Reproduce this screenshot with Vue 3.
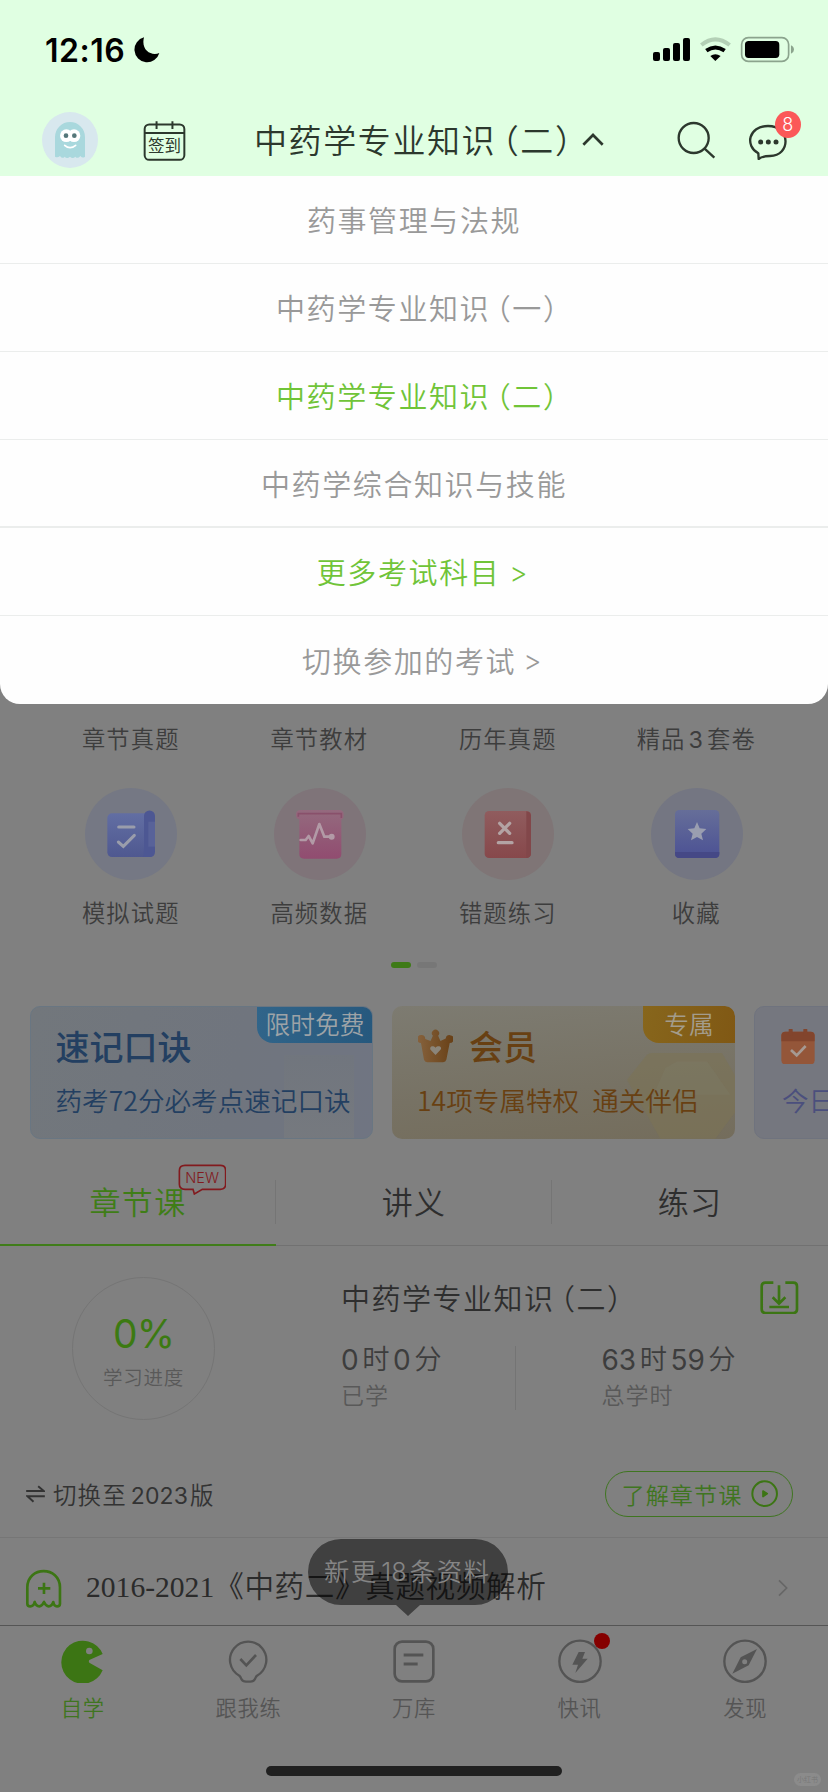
<script setup>
const subjects = [
  { name: '药事管理与法规' },
  { name: '中药学专业知识', level: '（一）' },
  { name: '中药学专业知识', level: '（二）', active: true },
  { name: '中药学综合知识与技能', last: true },
]
const topLabels = [['章节真题'], ['章节教材'], ['历年真题'], ['精品', '3', '套卷']]
const tools = [
  { label: '模拟试题', icon: 'paper' },
  { label: '高频数据', icon: 'pulse' },
  { label: '错题练习', icon: 'wrong' },
  { label: '收藏', icon: 'star' },
]
const tabs = [
  { label: '自学', icon: 'learn', active: true },
  { label: '跟我练', icon: 'practice' },
  { label: '万库', icon: 'bank' },
  { label: '快讯', icon: 'news' },
  { label: '发现', icon: 'find' },
]
</script>

<template>
  <div class="phone">
    <div class="status">
      <span class="time">12:16</span>
      <svg class="moon" viewBox="400 110 78 78"><path d="M430 111 A38 38 0 1 0 476 158 C452 168 420 150 430 111Z" /></svg>
      <svg class="signals" viewBox="714 108 430 80">
        <rect x="717" y="156" width="21" height="27" rx="6" /><rect x="747" y="144" width="21" height="39" rx="6" />
        <rect x="777" y="129" width="21" height="54" rx="6" /><rect x="807" y="114" width="21" height="69" rx="6" />
        <path d="M862 135 Q904 101 947 135" fill="none" stroke="#b4d0b6" stroke-width="12" />
        <path d="M877 152 Q904 133 932 152" fill="none" stroke="#000" stroke-width="12" />
        <path d="M889 168 Q904 157 920 168 L904 183Z" />
        <rect x="983" y="113" width="141" height="71" rx="20" fill="none" stroke="#8ba48d" stroke-width="5" />
        <rect x="993" y="123" width="103" height="51" rx="11" />
        <path d="M1131 136 Q1140 140 1140 149 Q1140 157 1131 161Z" fill="#8ba48d" />
      </svg>
    </div>

    <header class="header">
      <svg class="avatar" viewBox="126 336 168 168">
        <circle cx="210" cy="420" r="84" fill="#d8e8ee" />
        <path d="M165 470 V411 A45 45 0 0 1 255 411 V470 Q248 476 241 468 Q233 478 226 470 Q218 478 210 470 Q201 478 194 470 Q187 478 180 468 Q172 475 165 470Z" fill="#a9d8dd" />
        <circle cx="199" cy="407" r="19" fill="#fff" /><circle cx="222" cy="407" r="19" fill="#fff" />
        <circle cx="198" cy="407" r="7" fill="#55777a" /><circle cx="223" cy="407" r="7" fill="#55777a" />
        <path d="M194 436 Q210 450 227 436" fill="none" stroke="#fff" stroke-width="5" stroke-linecap="round" />
      </svg>
      <div class="calendar">
        <svg viewBox="430 360 130 126" fill="none" stroke="#2c382d" stroke-width="6">
          <rect x="435" y="373" width="120" height="107" rx="14" /><path d="M435 399H555M471 363V387M519 363V387" />
        </svg>
        <span>签到</span>
      </div>
      <div class="title">
        <span>中药学专业知识<i class="lvl">（二）</i></span>
        <svg viewBox="500 398 68 44"><path d="M504 436 L533 407 L562 436" fill="none" stroke="#2c382d" stroke-width="8" /></svg>
      </div>
      <svg class="search" viewBox="788 362 116 114" fill="none" stroke="#2c382d" stroke-width="7">
        <circle cx="838" cy="413" r="45" /><path d="M870 444 L900 472" />
      </svg>
      <div class="chat">
        <svg viewBox="1002 370 120 110">
          <path d="M1034 475 L1033 458 C992 436 1003 376 1062 376 C1131 376 1131 466 1068 466 C1055 466 1046 466 1034 475Z" fill="none" stroke="#2c382d" stroke-width="7" stroke-linejoin="round" />
          <g fill="#2c382d"><circle cx="1040" cy="424" r="7.500" /><circle cx="1063" cy="424" r="7.500" /><circle cx="1086" cy="424" r="7.500" /></g>
        </svg>
        <b>8</b>
      </div>
    </header>

    <div class="menu-wrap">
      <nav class="menu">
        <div v-for="s in subjects" :key="s.name + s.level" class="item" :class="{ active: s.active, last: s.last, leveled: s.level }">
          <span>{{ s.name }}<i v-if="s.level" class="lvl">{{ s.level }}</i></span>
        </div>
        <div class="item active more"><span>更多考试科目</span><em>&gt;</em></div>
        <div class="item switch"><span>切换参加的考试</span><em>&gt;</em></div>
      </nav>
    </div>

    <div class="labels">
      <div v-for="(l, i) in topLabels" :key="i"><template v-for="(t, j) in l" :key="j"><b v-if="j === 1" class="num">{{ t }}</b><template v-else>{{ t }}</template></template></div>
    </div>
    <div class="tools">
      <div v-for="t in tools" :key="t.label" class="tool">
        <svg v-if="t.icon === 'paper'" viewBox="256 294 276 276">
          <defs><linearGradient id="gp" x2="0" y2="1"><stop stop-color="#626ea3" /><stop offset="1" stop-color="#4f5890" /></linearGradient></defs>
          <circle cx="394" cy="432" r="138" fill="#757884" />
          <rect x="323" y="370" width="140" height="131" rx="14" fill="url(#gp)" />
          <path d="M433 470 V378 A16 16 0 0 1 466 378 V485 Q466 501 450 501 H430 Q433 490 433 470Z" fill="#4d5793" />
          <path d="M446 470 V395 H466 V470Z" fill="#586299" />
          <path d="M357 411H403M356 456L371 469L404 436" fill="none" stroke="#9a9dab" stroke-width="9" stroke-linecap="round" />
        </svg>
        <svg v-else-if="t.icon === 'pulse'" viewBox="822 294 276 276">
          <defs><linearGradient id="gq" x2="0" y2="1"><stop stop-color="#946a7e" /><stop offset="1" stop-color="#914c70" /></linearGradient></defs>
          <circle cx="960" cy="432" r="138" fill="#7f7479" />
          <path d="M902 360H1018Q1031 360 1031 374Q1031 388 1024 388V492Q1024 506 1010 506H912Q898 506 898 492V388Q888 386 888 374Q888 360 902 360Z" fill="url(#gq)" />
          <path d="M895 380V371H1024V384" fill="none" stroke="#89506b" stroke-width="5" />
          <path d="M902 450H917L926 438L938 460L958 402L973 440H990" fill="none" stroke="#b29aa6" stroke-width="8" stroke-linejoin="round" stroke-linecap="round" /><circle cx="995" cy="440" r="9" fill="#b29aa6" />
        </svg>
        <svg v-else-if="t.icon === 'wrong'" viewBox="145 294 276 276">
          <defs><linearGradient id="gw" x2="0" y2="1"><stop stop-color="#905c5e" /><stop offset="1" stop-color="#87484b" /></linearGradient></defs>
          <circle cx="283" cy="432" r="138" fill="#7f7576" />
          <rect x="213" y="363" width="139" height="141" rx="13" fill="url(#gw)" />
          <path d="M338 364Q352 365 352 378V490Q352 502 338 504Z" fill="#82474a" />
          <path d="M258 400L288 430M288 400L258 430M254 458H295" stroke="#b3a3a4" stroke-width="10" stroke-linecap="round" />
        </svg>
        <svg v-else viewBox="710 294 276 276">
          <defs><linearGradient id="gs" x2="0" y2="1"><stop stop-color="#666e99" /><stop offset="1" stop-color="#4b5194" /></linearGradient></defs>
          <circle cx="848" cy="432" r="138" fill="#747682" />
          <rect x="782" y="360" width="133" height="144" rx="13" fill="url(#gs)" />
          <path d="M782 486H915V491Q915 504 902 504H795Q782 504 782 491Z" fill="#454886" />
          <path d="M848 396L856 415L876 417L861 431L866 451L848 441L830 451L835 431L820 417L840 415Z" fill="#9a9eb0" />
        </svg>
        <span>{{ t.label }}</span>
      </div>
    </div>
    <div class="pager"><i class="on"></i><i></i></div>

    <section class="cards">
      <article class="card blue">
        <div class="deco"></div>
        <div class="badge">限时免费</div>
        <h3>速记口诀</h3>
        <p>药考72分必考点速记口诀</p>
      </article>
      <article class="card gold">
        <svg class="hex" viewBox="640 220 323 257"><path d="M700 225Q705 220 715 220H925L1000 350L905 477H740L640 300Z" fill="#7c7355" opacity=".6" /><path d="M755 265L790 245H880L950 345H830L700 390Z" fill="#7e7a67" opacity=".35" /></svg>
        <div class="badge">专属</div>
        <h3>
          <svg viewBox="12 148 106 102">
            <defs><linearGradient id="gc"><stop stop-color="#86623d" /><stop offset="1" stop-color="#684016" /></linearGradient></defs>
            <path d="M30 240L21 190A12 12 0 1 1 34 178L50 184L57 168A11 11 0 1 1 73 168L80 184L96 176A12 12 0 1 1 108 190L98 240Q96 248 88 248H40Q32 248 30 240Z" fill="url(#gc)" />
            <path d="M65 226L52 213C43 203 56 194 65 204C74 194 89 203 78 213Z" fill="#8b857a" />
          </svg>
          会员
        </h3>
        <p>14项专属特权<span>通关伴侣</span></p>
      </article>
      <article class="card violet">
        <h3>
          <svg viewBox="1100 146 102 106">
            <rect x="1101" y="154" width="100" height="98" rx="12" fill="#945639" /><path d="M1101 183V166Q1101 154 1113 154H1189Q1201 154 1201 166V183Z" fill="#82452d" />
            <path d="M1129 149V160M1173 149V160" stroke="#82452d" stroke-width="12" stroke-linecap="round" /><path d="M1130 209L1147 225L1174 197" fill="none" stroke="#a59992" stroke-width="8" />
          </svg>
        </h3>
        <p>今日</p>
      </article>
    </section>

    <div class="course-tabs">
      <div class="ct active">章节课
        <div class="new">
          <svg viewBox="533 550 146 94"><path d="M554 554H660Q676 554 676 570V611Q676 626 660 626H606L582 640L578 626H554Q537 626 537 611V570Q537 554 554 554Z" fill="none" stroke="#821a1e" stroke-width="5" /></svg>
          <span>NEW</span>
        </div>
      </div>
      <div class="ct">讲义</div>
      <div class="ct">练习</div>
    </div>

    <section class="progress">
      <div class="ring"><strong>0%</strong><span>学习进度</span></div>
      <div class="info">
        <div class="info-head">
          <span>中药学专业知识<i class="lvl">（二）</i></span>
          <svg viewBox="1034 94 116 100" fill="none" stroke="#3c7514" stroke-width="8">
            <path d="M1074 99H1050Q1039 99 1039 110V179Q1039 190 1050 190H1134Q1145 190 1145 179V110Q1145 99 1134 99H1110M1091 107V160M1072 143L1091 162L1110 143M1062 172H1121" />
          </svg>
        </div>
        <div class="stats">
          <div class="stat"><div class="val"><b>0</b>时<b>0</b>分</div><small>已学</small></div>
          <div class="stat total"><div class="val"><b>63</b>时<b>59</b>分</div><small>总学时</small></div>
        </div>
      </div>
    </section>

    <div class="version">
      <svg class="swap" viewBox="80 706 56 54" fill="none" stroke="#333" stroke-width="6"><path d="M80 724H133L116 710M136 740H84L102 756" /></svg>
      <span class="ver">切换至<b>2023</b>版</span>
      <div class="learn">了解章节课
        <svg viewBox="1006 692 82 82"><circle cx="1047" cy="733" r="37" fill="none" stroke="#3c7514" stroke-width="6" /><path d="M1042 725L1055 733L1042 742Z" fill="#3c7514" stroke="#3c7514" stroke-width="5" stroke-linejoin="round" /></svg>
      </div>
    </div>

    <div class="row">
      <svg class="ghost" viewBox="74 116 112 118" fill="none" stroke="#3c7514" stroke-width="8" stroke-linejoin="round">
        <path d="M81 220V171C81 106 179 106 179 171V220Q179 228 170 228Q161 228 159 215Q155 228 145 228Q137 228 131 215Q125 228 117 228Q107 228 103 215Q100 228 90 228Q81 228 81 220Z" /><path d="M131 157V191M113 174H150" />
      </svg>
      <span class="row-text">2016-2021<span>《中药二》真题视频解析</span></span>
      <svg class="arrow" viewBox="1088 146 36 54"><path d="M1094 150L1117 173L1094 196" fill="none" stroke="#666" stroke-width="5" /></svg>
      <div class="tip">新更<b>18</b>条资料</div>
    </div>

    <footer class="tabbar">
      <div v-for="t in tabs" :key="t.label" class="tab" :class="{ active: t.active }">
        <div class="tab-icon">
          <svg v-if="t.icon === 'learn'" viewBox="181 328 132 132"><path d="M306 373A64.500 64.500 0 1 0 306 422L266 399Q263 395 266 391Z" fill="#3c7514" /><circle cx="266" cy="364" r="10" fill="#808080" /></svg>
          <svg v-else-if="t.icon === 'practice'" viewBox="681 328 132 132" fill="none" stroke="#545454" stroke-width="7"><path d="M721 438A54.500 54.500 0 1 1 774 438Q770 442 768 448Q764 456 754 456H741Q731 456 727 448Q725 442 721 438Z" /><path d="M724 388L742 407L771 376" stroke-width="8" /></svg>
          <svg v-else-if="t.icon === 'bank'" viewBox="0 0 132 132" fill="none" stroke="#545454" stroke-width="8"><rect x="8" y="8" width="116" height="119" rx="22" /><path d="M35 48H94M35 75H77" stroke-width="9" /></svg>
          <svg v-else-if="t.icon === 'news'" viewBox="426 329 132 132"><circle cx="492" cy="396" r="62" fill="none" stroke="#545454" stroke-width="7" /><path d="M488 368H507L499 388H515L478 431L486 406H469Z" fill="#545454" /></svg>
          <svg v-else viewBox="924 329 132 132"><circle cx="990" cy="396" r="62" fill="none" stroke="#545454" stroke-width="7" /><path d="M1026 359L1001 408L952 433L977 384Z" fill="#545454" /><circle cx="989" cy="397" r="7.500" fill="#808080" /></svg>
          <i v-if="t.icon === 'news'" class="dot"></i>
        </div>
        <span>{{ t.label }}</span>
      </div>
      <div class="home"></div>
      <div class="mark">小红书</div>
    </footer>
  </div>
</template>

<style>
body { background: #808080; }
</style>

<style scoped>
.phone { width: 828px; height: 1792px; overflow: hidden; position: relative; background: #808080; font-family: "Inter", "Noto Sans CJK SC", sans-serif; font-weight: 350; color: #3c3c3c; white-space: nowrap; }
.phone * { box-sizing: border-box; }
svg { display: block; flex: none; }
.lvl { font-style: normal; font-feature-settings: "halt"; margin-left: 6px; }
b { font-weight: 400; }
.status { height: 88px; background: #e0ffe2; display: flex; padding: 0 33px 0 45px; }
.time { font: 600 32px/101px "Inter", sans-serif; color: #000; width: 88px; letter-spacing: .5px; }
.moon { width: 26px; height: 26px; margin: 37px 0 0 1px; }
.signals { width: 143.3px; height: 26.700px; margin: 36px 0 0 auto; }
.header { height: 88px; background: #e0ffe2; display: flex; align-items: flex-start; padding: 16px 0 0 42px; color: #2c382d; }
.avatar { width: 56px; height: 56px; margin-top: 8px; }
.calendar { width: 43px; height: 42px; margin: 16px 0 0 45px; position: relative; }
.calendar svg { width: 43px; height: 42px; }
.calendar span { position: absolute; left: 5px; top: 14px; font-size: 16.500px; line-height: 24px; font-weight: 400; }
.title { width: 422px; height: 48px; margin: 11px 0 0 68px; display: flex; align-items: center; font-size: 33px; letter-spacing: 1.600px; }
.title svg { width: 22.700px; height: 14.700px; margin-left: 9px; }
.search { width: 38.700px; height: 38px; margin: 16.500px 0 0 1px; }
.chat { position: relative; margin: 19.500px 0 0 32px; width: 40px; height: 36.700px; }
.chat svg { width: 40px; height: 36.700px; }
.chat b { position: absolute; left: 27px; top: -13px; width: 26px; height: 27px; border-radius: 50%; background: #fb5858; color: #fff; font-size: 18px; line-height: 27px; text-align: center; font-weight: 350; }
.menu-wrap { background: #808080; height: 528px; }
.menu { height: 528px; background: #fefefe; border-radius: 0 0 20px 20px; color: #999; font-size: 29px; letter-spacing: 1.600px; }
.item { height: 88px; border-bottom: 1px solid #ebedec; display: flex; justify-content: center; align-items: center; padding-bottom: 1px; }
.item.leveled { padding-left: 7px; }
.item.last { border-bottom-width: 2px; }
.item.active { color: #70c438; }
.item em { font-style: normal; font-size: 28px; margin-left: 9px; line-height: 30px; padding-top: 3px; }
.more { padding-left: 18px; }
.switch { border: 0; padding-left: 17px; }
.switch em { margin-left: 7px; }
.labels, .tools { display: grid; grid-template-columns: repeat(4, 188.500px); padding-left: 36.500px; text-align: center; font-size: 23.300px; letter-spacing: 1.100px; }
.labels { height: 84px; line-height: 71px; color: #3d3d3d; }
.labels .num { margin: 0 3px; }
.tool { display: flex; flex-direction: column; align-items: center; color: #3d3d3d; }
.tool svg { width: 92px; height: 92px; margin-left: 1px; }
.tool span { line-height: 34px; margin-top: 17px; }
.pager { display: flex; gap: 6px; padding-left: 391px; margin-top: 31px; height: 6px; }
.pager i { width: 20px; height: 6px; border-radius: 3px; background: #777; }
.pager .on { background: #3e7a17; }
.cards { display: flex; gap: 19px; padding-left: 30px; margin-top: 38px; height: 133px; }
.card { width: 343px; flex: none; border-radius: 10px; position: relative; overflow: hidden; font-family: "Noto Sans CJK SC", sans-serif; }
.card h3 { margin: 17px 0 0 27px; font-size: 34px; line-height: 46px; font-weight: 500; display: flex; align-items: center; height: 46px; }
.card p { margin: 13px 0 0 27px; font-size: 26.600px; line-height: 36px; }
.badge { position: absolute; right: 0; top: 0; height: 36.500px; border-radius: 0 10px 0 16px; font-size: 24.700px; line-height: 34px; text-align: center; color: #9da3a7; }
.blue { background: linear-gradient(100deg, #72777c, #70757e 60%, #707582); border: 1px solid #697682; color: #233f61; }
.blue .badge { right: -1px; top: -1px; width: 116px; background: linear-gradient(100deg, #31658a, #26587d); }
.deco { position: absolute; right: 18px; bottom: 0; width: 70px; height: 83px; background: linear-gradient(#71767d, #787b7e); opacity: .7; }
.blue h3, .blue p { position: relative; margin-left: 24.500px; }
.blue h3 { margin-top: 16px; }
.gold { background: linear-gradient(175deg, #7d7b71, #777264 60%, #746d5c); color: #684012; }
.gold .badge { width: 92px; background: linear-gradient(100deg, #87661c, #805814); color: #a39c8c; }
.gold h3 { margin-left: 26px; gap: 16px; }
.gold h3 svg { width: 35px; height: 34px; }
.gold p { position: relative; margin-left: 25px; }
.gold p span { margin-left: 13px; }
.hex { position: absolute; right: 0; bottom: 0; width: 107.700px; height: 85.700px; }
.violet { background: #75777f; border: 1px solid #6f737e; color: #4b4f7d; }
.violet h3 { margin-left: 26px; margin-top: 16px; }
.violet h3 svg { width: 34px; height: 35.300px; margin-top: 1px; }
.course-tabs { display: grid; grid-template-columns: repeat(3, 1fr); height: 107px; border-bottom: 1px solid #717171; font-size: 31px; letter-spacing: 1.300px; line-height: 46px; text-align: center; color: #2e2e2e; }
.ct { position: relative; padding-top: 41px; background: linear-gradient(#757575, #757575) right 41px / 1px 44px no-repeat; }
.ct:last-child { background: none; }
.ct.active { color: #3f7d17; background: linear-gradient(#757575, #757575) right 41px / 1px 44px no-repeat, linear-gradient(#407d1a, #407d1a) left bottom / 100% 2px no-repeat; height: 107px; }
.new { position: absolute; left: 177.700px; top: 25px; width: 48.700px; height: 31.300px; }
.new svg { width: 48.700px; height: 31.300px; }
.new span { position: absolute; left: 0; top: 2px; width: 49px; font-size: 14.500px; line-height: 24px; letter-spacing: 0; color: #821a1e; }
.progress { display: flex; height: 210px; }
.ring { width: 143px; height: 143px; border: 1.500px solid #757575; border-radius: 50%; margin: 31px 0 0 72px; display: flex; flex-direction: column; align-items: center; }
.ring strong { font-weight: 400; font-size: 39px; line-height: 48px; margin-top: 32px; color: #3c7a12; letter-spacing: -1px; }
.ring span { font-size: 19.500px; letter-spacing: .8px; line-height: 30px; margin-top: 5px; color: #595959; }
.info { margin-left: 126px; width: 457.500px; }
.info-head { display: flex; justify-content: space-between; align-items: center; height: 44px; margin-top: 29px; font-size: 29px; letter-spacing: 1.500px; color: #2e2e2e; }
.info-head svg { width: 38.700px; height: 33.300px; margin-top: 1px; }
.stats { display: flex; margin-top: 27px; height: 64px; }
.stat { width: 174.500px; border-right: 1px solid #747474; }
.stat.total { border: 0; padding-left: 86px; width: 280px; }
.val { display: flex; gap: 3.500px; font-size: 27.300px; line-height: 36px; margin-top: -4px; color: #3d3d3d; }
.val b { font-size: 28px; }
.stat small { display: block; font-size: 23px; line-height: 32px; letter-spacing: 1px; margin-top: 2px; color: #595959; }
.version { display: flex; align-items: center; height: 82px; padding: 0 35.500px 6px 26px; border-bottom: 1px solid #767676; color: #333; font-size: 23.500px; letter-spacing: 1.100px; }
.swap { width: 19px; height: 18px; margin-right: 8px; }
.ver b { font-size: 23px; margin: 0 2px 0 4px; letter-spacing: .1px; }
.learn { margin-left: auto; width: 188px; height: 46px; border: 1px solid #3f7520; border-radius: 23px; display: flex; align-items: center; padding-left: 16px; font-size: 23.200px; letter-spacing: 1px; color: #3f7520; gap: 9px; }
.learn svg { width: 27.300px; height: 27.300px; }
.row { position: relative; display: flex; height: 87px; padding-left: 24.700px; color: #2b2b2b; }
.ghost { width: 37.300px; height: 39.300px; margin-top: 30.500px; }
.row-text { font-family: "Liberation Serif", "Noto Sans CJK SC", sans-serif; font-size: 29.600px; line-height: 44px; margin: 27px 0 0 24px; }
.row-text span { letter-spacing: .600px; }
.arrow { position: absolute; right: 39px; top: 41px; width: 12px; height: 18px; }
.tip { position: absolute; left: 308px; top: 1px; width: 200px; height: 77px; background: rgba(0, 0, 0, .5); clip-path: path("M33 0H167A33 33 0 0 1 167 66H112L100 77L88 66H33A33 33 0 0 1 33 0Z"); color: #858585; font-size: 25.300px; line-height: 66px; padding-left: 16px; letter-spacing: 1.800px; }
.tip b { margin: 0 3px; letter-spacing: 0; font-weight: 350; }
.tabbar { position: relative; height: 167px; border-top: 1px solid #555; display: grid; grid-template-columns: repeat(5, 1fr); }
.tab { display: flex; flex-direction: column; align-items: center; font-size: 21.300px; letter-spacing: .7px; color: #555; }
.tab-icon { position: relative; margin-top: 13px; }
.tab-icon svg { width: 44px; height: 44px; }
.tab span { line-height: 30px; margin-top: 10px; }
.tab.active { color: #3f7520; }
.dot { position: absolute; left: 36px; top: -6px; width: 16px; height: 16px; border-radius: 50%; background: #850000; }
.home { position: absolute; left: 266px; top: 140px; width: 296px; height: 10px; border-radius: 5px; background: #202020; }
.mark { position: absolute; left: 794px; top: 147px; width: 27px; height: 13px; border-radius: 7px; background: #8b8b8b; color: #777; font-size: 7px; line-height: 13px; text-align: center; }
</style>
